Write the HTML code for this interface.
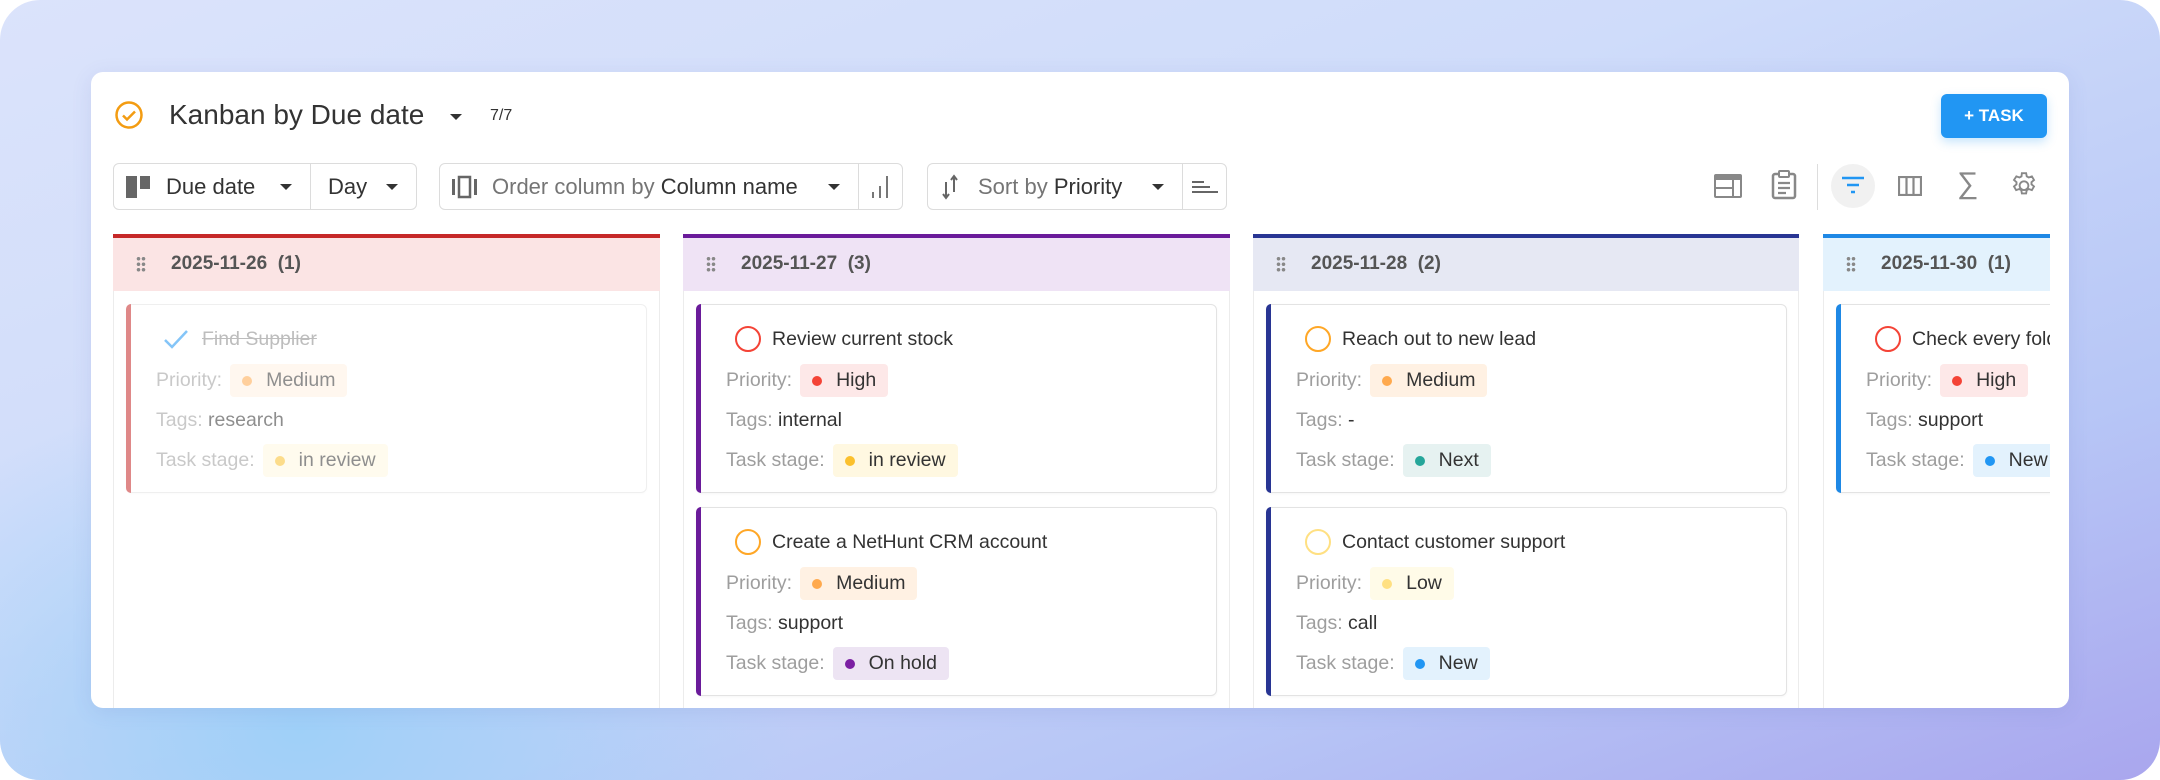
<!DOCTYPE html>
<html><head><meta charset="utf-8"><style>
*{box-sizing:border-box;margin:0;padding:0}
body{width:2160px;height:780px;overflow:hidden;font-family:"Liberation Sans",sans-serif;background:#fff}
.bg{position:absolute;left:0;top:0;width:2160px;height:780px;border-radius:40px;background:linear-gradient(160deg,#dbe3fb 0%,#cfdcfa 40%,#b7c6f6 75%,#a9a6ee 100%);overflow:hidden}
.bg:before{content:"";position:absolute;left:-200px;bottom:-300px;width:1000px;height:700px;background:radial-gradient(ellipse at center,#9fd0f8 0%,rgba(159,208,248,0) 70%)}
.panel{position:absolute;left:91px;top:72px;width:1978px;height:636px;background:#fff;border-radius:12px;overflow:hidden;box-shadow:0 4px 20px rgba(80,100,180,.12)}
.a{position:absolute}
.title{left:78px;top:27px;font-size:28px;color:#333}
.btn{left:1850px;top:22px;width:106px;height:44px;background:#2196f3;border-radius:6px;color:#fff;font-weight:bold;font-size:17px;text-align:center;line-height:44px;box-shadow:0 4px 10px rgba(33,150,243,.25)}
.grp{top:91px;height:47px;border:1px solid #dcdcdc;border-radius:6px;display:flex;align-items:center;font-size:22px;color:#333}
.sec{display:flex;align-items:center;height:100%;flex:none;padding-right:18px}
.sec + .sec{border-left:1px solid #dcdcdc}
.caret{width:0;height:0;border-left:6px solid transparent;border-right:6px solid transparent;border-top:6px solid #333;display:inline-block;margin-left:auto}
.gray{color:#757575}
.col{top:162px;height:500px;border:1px solid #ececec;border-top:none}
.ch{position:absolute;left:-1px;right:-1px;top:0;height:57px;border-top:4px solid;font-size:19px;font-weight:bold;color:#555;line-height:52px;padding-left:58px}
.grip{position:absolute;left:23px;top:18px;width:10px;height:16px;background:radial-gradient(circle,#888 1.6px,transparent 2px) 0 0/5px 5.5px}
.card{position:absolute;left:12px;width:521px;height:189px;border:1px solid #e3e3e3;border-radius:6px;background:#fff;box-shadow:0 1px 2px rgba(0,0,0,.04)}
.card .lb{position:absolute;left:-1px;top:-1px;bottom:-1px;width:5px;border-radius:5px 0 0 5px}
.ct{position:absolute;left:75px;top:23px;font-size:19.5px;color:#333}
.circ{position:absolute;left:38px;top:21px;width:26px;height:26px;border-radius:50%;border:2.5px solid}
.row{position:absolute;left:29px;font-size:19.5px;color:#9e9e9e;display:flex;align-items:center;height:33px}
.row b{font-weight:normal;color:#333}
.chip{display:inline-flex;align-items:center;height:33px;padding:0 12px;border-radius:4px;margin-left:8px;color:#333}
.dot{width:10px;height:10px;border-radius:50%;margin-right:14px}
</style></head><body>
<div class="bg"></div>
<div class="panel">
  <svg class="a" style="left:23px;top:28px" width="30" height="30" viewBox="0 0 30 30"><circle cx="15" cy="15" r="12.5" fill="none" stroke="#f39c12" stroke-width="2.5"/><path d="M9 15.5l4 4 8-8" fill="none" stroke="#f39c12" stroke-width="2.5"/></svg>
  <div class="a title">Kanban by Due date</div>
  <div class="a caret" style="left:359px;top:42px"></div>
  <div class="a" style="left:399px;top:35px;font-size:16px;color:#333">7/7</div>
  <div class="a btn">+ TASK</div>

  <div class="a grp" style="left:22px;width:304px">
    <div class="sec" style="width:196px">
      <svg style="margin-left:12px" width="26" height="24" viewBox="0 0 26 24"><rect x="0" y="1" width="11" height="22" fill="#666"/><rect x="14" y="1" width="10" height="13" fill="#666"/></svg>
      <span style="margin-left:14px">Due date</span><span class="caret"></span>
    </div>
    <div class="sec" style="width:106px">
      <span style="margin-left:17px">Day</span><span class="caret"></span>
    </div>
  </div>
  <div class="a grp" style="left:348px;width:464px">
    <div class="sec" style="width:418px">
      <svg style="margin-left:12px" width="26" height="24" viewBox="0 0 26 24"><rect x="0" y="4" width="3" height="16" fill="#666"/><rect x="7" y="2" width="11" height="20" fill="none" stroke="#666" stroke-width="2.5"/><rect x="22" y="4" width="3" height="16" fill="#666"/></svg>
      <span class="gray" style="margin-left:14px">Order column by&nbsp;</span><span>Column name</span><span class="caret"></span>
    </div>
    <div class="sec" style="width:44px;padding:0">
      <svg style="margin-left:12px" width="18" height="26" viewBox="0 0 18 26"><rect x="1" y="18" width="2" height="6" fill="#777"/><rect x="8" y="12" width="2" height="12" fill="#777"/><rect x="15" y="2" width="2" height="22" fill="#777"/></svg>
    </div>
  </div>
  <div class="a grp" style="left:836px;width:300px">
    <div class="sec" style="width:254px">
      <svg style="margin-left:12px" width="20" height="26" viewBox="0 0 20 26"><path d="M6 8v16M3 20l3 4 3-4M14 18V2M11 6l3-4 3 4" fill="none" stroke="#666" stroke-width="2"/></svg>
      <span class="gray" style="margin-left:18px">Sort by&nbsp;</span><span>Priority</span><span class="caret"></span>
    </div>
    <div class="sec" style="width:44px;padding:0">
      <svg style="margin-left:9px" width="26" height="24" viewBox="0 0 26 24"><rect x="0" y="6" width="12" height="2" fill="#666"/><rect x="0" y="11" width="18" height="2" fill="#666"/><rect x="0" y="16" width="26" height="2" fill="#666"/></svg>
    </div>
  </div>

  <svg class="a" style="left:1622px;top:101px" width="30" height="26" viewBox="0 0 30 26"><rect x="1" y="1" width="28" height="24" rx="2" fill="#888"/><rect x="3" y="7" width="16" height="7" fill="#fff"/><rect x="3" y="16" width="16" height="7" fill="#fff"/><rect x="21" y="7" width="6" height="16" fill="#fff"/></svg>
  <svg class="a" style="left:1680px;top:98px" width="26" height="30" viewBox="0 0 26 30"><rect x="2" y="4" width="22" height="24" rx="2" fill="none" stroke="#888" stroke-width="2.5"/><rect x="8" y="1" width="10" height="6" rx="1" fill="#fff" stroke="#888" stroke-width="2"/><path d="M7 13h12M7 18h12M7 23h8" stroke="#888" stroke-width="2.2"/></svg>
  <div class="a" style="left:1726px;top:92px;width:1px;height:46px;background:#ddd"></div>
  <div class="a" style="left:1740px;top:92px;width:44px;height:44px;border-radius:50%;background:#f1f1f1"></div>
  <svg class="a" style="left:1750px;top:104px" width="24" height="20" viewBox="0 0 24 20"><path d="M1 2h22M6 9h12M10 16h4" stroke="#2196f3" stroke-width="2.6"/></svg>
  <svg class="a" style="left:1807px;top:104px" width="24" height="20" viewBox="0 0 24 20"><rect x="1" y="1" width="22" height="18" fill="none" stroke="#888" stroke-width="2.2"/><path d="M8.5 1v18M15.5 1v18" stroke="#888" stroke-width="2.2"/></svg>
  <div class="a" style="left:1866px;top:95px;font-size:30px;color:#888">∑</div>
  <svg class="a" style="left:1918px;top:98px" width="30" height="30" viewBox="0 0 24 24"><path d="M12 8.5a3.5 3.5 0 1 0 0 7 3.5 3.5 0 0 0 0-7zM10.3 2h3.4l.5 2.6 1.6.9 2.5-.9 1.7 2.9-2 1.7v1.8l2 1.7-1.7 2.9-2.5-.9-1.6.9-.5 2.6h-3.4l-.5-2.6-1.6-.9-2.5.9-1.7-2.9 2-1.7V9.2l-2-1.7L5.9 4.6l2.5.9 1.6-.9z" fill="none" stroke="#888" stroke-width="1.5" transform="translate(0 .5)"/></svg>

  <div class="a" style="left:22px;top:0;width:1937px;height:636px;overflow:hidden">
    <div class="a col" style="left:0;width:547px">
      <div class="ch" style="border-color:#c62828;background:#fbe4e4"><span class="grip"></span>2025-11-26&nbsp;&nbsp;(1)</div>
      <div class="card" style="top:70px;opacity:.55">
        <div class="lb" style="background:#c62828"></div>
        <svg class="a" style="left:36px;top:22px" width="26" height="24" viewBox="0 0 26 24"><path d="M2 13l7 7L24 4" fill="none" stroke="#2196f3" stroke-width="2.5"/></svg>
        <div class="ct" style="text-decoration:line-through;color:#888">Find Supplier</div>
        <div class="row" style="top:59px">Priority:<span class="chip" style="background:#fff1e3"><span class="dot" style="background:#ffa94d"></span>Medium</span></div>
        <div class="row" style="top:99px">Tags:&nbsp;<b>research</b></div>
        <div class="row" style="top:139px">Task stage:<span class="chip" style="background:#fff8e1"><span class="dot" style="background:#fbc02d"></span>in review</span></div>
      </div>
    </div>
    <div class="a col" style="left:570px;width:547px">
      <div class="ch" style="border-color:#6a1b9a;background:#efe3f5"><span class="grip"></span>2025-11-27&nbsp;&nbsp;(3)</div>
      <div class="card" style="top:70px">
        <div class="lb" style="background:#6a1b9a"></div>
        <div class="circ" style="border-color:#f44336"></div>
        <div class="ct">Review current stock</div>
        <div class="row" style="top:59px">Priority:<span class="chip" style="background:#fde8e8"><span class="dot" style="background:#f44336"></span>High</span></div>
        <div class="row" style="top:99px">Tags:&nbsp;<b>internal</b></div>
        <div class="row" style="top:139px">Task stage:<span class="chip" style="background:#fff8e1"><span class="dot" style="background:#fbc02d"></span>in review</span></div>
      </div>
      <div class="card" style="top:273px">
        <div class="lb" style="background:#6a1b9a"></div>
        <div class="circ" style="border-color:#ffa726"></div>
        <div class="ct">Create a NetHunt CRM account</div>
        <div class="row" style="top:59px">Priority:<span class="chip" style="background:#fff1e3"><span class="dot" style="background:#ffa94d"></span>Medium</span></div>
        <div class="row" style="top:99px">Tags:&nbsp;<b>support</b></div>
        <div class="row" style="top:139px">Task stage:<span class="chip" style="background:#ede4f3"><span class="dot" style="background:#7b1fa2"></span>On hold</span></div>
      </div>
    </div>
    <div class="a col" style="left:1140px;width:546px">
      <div class="ch" style="border-color:#283593;background:#e6e8f3"><span class="grip"></span>2025-11-28&nbsp;&nbsp;(2)</div>
      <div class="card" style="top:70px">
        <div class="lb" style="background:#283593"></div>
        <div class="circ" style="border-color:#ffa726"></div>
        <div class="ct">Reach out to new lead</div>
        <div class="row" style="top:59px">Priority:<span class="chip" style="background:#fff1e3"><span class="dot" style="background:#ffa94d"></span>Medium</span></div>
        <div class="row" style="top:99px">Tags:&nbsp;<b>-</b></div>
        <div class="row" style="top:139px">Task stage:<span class="chip" style="background:#e6f2f1"><span class="dot" style="background:#26a69a"></span>Next</span></div>
      </div>
      <div class="card" style="top:273px">
        <div class="lb" style="background:#283593"></div>
        <div class="circ" style="border-color:#ffe082"></div>
        <div class="ct">Contact customer support</div>
        <div class="row" style="top:59px">Priority:<span class="chip" style="background:#fffbe8"><span class="dot" style="background:#ffe082"></span>Low</span></div>
        <div class="row" style="top:99px">Tags:&nbsp;<b>call</b></div>
        <div class="row" style="top:139px">Task stage:<span class="chip" style="background:#e3f2fd"><span class="dot" style="background:#2196f3"></span>New</span></div>
      </div>
    </div>
    <div class="a col" style="left:1710px;width:546px">
      <div class="ch" style="border-color:#1e88e5;background:#e3f2fd"><span class="grip"></span>2025-11-30&nbsp;&nbsp;(1)</div>
      <div class="card" style="top:70px">
        <div class="lb" style="background:#1e88e5"></div>
        <div class="circ" style="border-color:#f44336"></div>
        <div class="ct">Check every folder</div>
        <div class="row" style="top:59px">Priority:<span class="chip" style="background:#fde8e8"><span class="dot" style="background:#f44336"></span>High</span></div>
        <div class="row" style="top:99px">Tags:&nbsp;<b>support</b></div>
        <div class="row" style="top:139px">Task stage:<span class="chip" style="background:#e3f2fd"><span class="dot" style="background:#2196f3"></span>New</span></div>
      </div>
    </div>
  </div>
</div>
</body></html>
